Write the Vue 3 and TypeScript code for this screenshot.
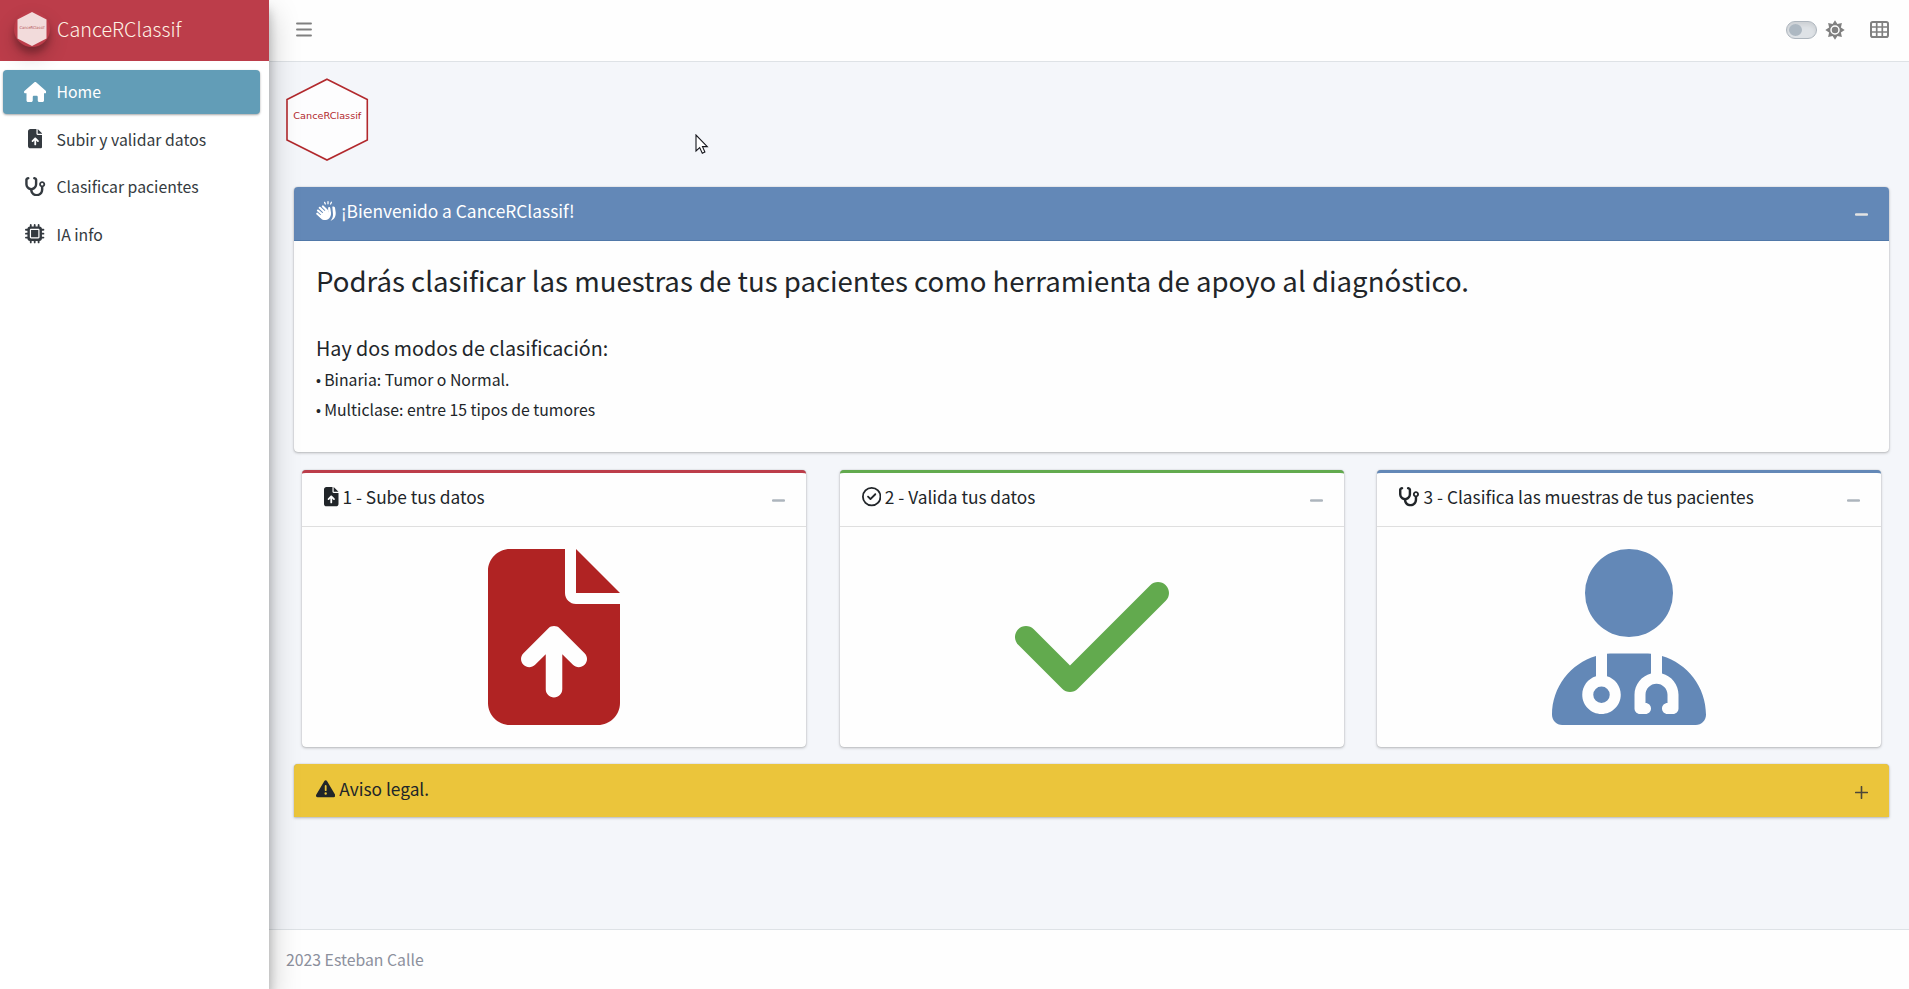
<script setup lang="ts">
import { ref } from 'vue'

interface Glyph { box: string; w: number; h: number; d: string }

const filePath = 'M64 0C28.7 0 0 28.7 0 64V448c0 35.3 28.7 64 64 64H320c35.3 0 64-28.7 64-64V160H256c-17.7 0-32-14.3-32-32V0H64zM256 0V128H384L256 0zM216 408c0 13.3-10.7 24-24 24s-24-10.7-24-24V305.9l-31 31c-9.4 9.4-24.6 9.4-33.9 0s-9.4-24.6 0-33.9l72-72c9.4-9.4 24.6-9.4 33.9 0l72 72c9.4 9.4 9.4 24.6 0 33.9s-24.6 9.4-33.9 0l-31-31V408z'
const stethoscopePath = 'M142.4 21.9c5.6 16.8-3.5 34.9-20.2 40.5L96 71.1V192c0 53 43 96 96 96s96-43 96-96V71.1l-26.1-8.7c-16.8-5.6-25.8-23.7-20.2-40.5s23.7-25.8 40.5-20.2l26.1 8.7C334.4 19.1 352 43.5 352 71.1V192c0 77.2-54.6 141.6-127.3 156.7C231 404.6 278.4 448 336 448c61.9 0 112-50.1 112-112V265.3c-28.3-12.3-48-40.5-48-73.3c0-44.2 35.8-80 80-80s80 35.8 80 80c0 32.8-19.7 61-48 73.3V336c0 97.2-78.8 176-176 176c-92.9 0-168.9-71.9-175.5-163.1C87.2 334.2 32 269.6 32 192V71.1c0-27.5 17.6-52 43.8-60.7l26.1-8.7c16.8-5.6 34.9 3.5 40.5 20.2zM480 224a32 32 0 1 0 0-64 32 32 0 1 0 0 64z'

const navItems: { label: string; glyph: Glyph }[] = [
  { label: 'Home', glyph: { box: '0 0 576 512', w: 22.5, h: 20, d: 'M575.8 255.5c0 18-15 32.1-32 32.1h-32l.7 160.2c0 2.7-.2 5.4-.5 8.1V472c0 22.1-17.9 40-40 40H456c-1.1 0-2.2 0-3.3-.1c-1.4 .1-2.8 .1-4.2 .1H416 392c-22.1 0-40-17.9-40-40V448 384c0-17.7-14.3-32-32-32H256c-17.7 0-32 14.3-32 32v64 24c0 22.1-17.9 40-40 40H160 128.1c-1.5 0-3-.1-4.5-.2c-1.2 .1-2.4 .2-3.6 .2H104c-22.1 0-40-17.9-40-40V360c0-.9 0-1.9 .1-2.8V287.6H32c-18 0-32-14-32-32.1c0-9 3-17 10-24L266.4 8c7-7 15-8 22-8s15 2 21 7L564.8 231.5c8 7 12 15 11 24z' } },
  { label: 'Subir y validar datos', glyph: { box: '0 0 384 512', w: 14.5, h: 19.36, d: filePath } },
  { label: 'Clasificar pacientes', glyph: { box: '0 0 576 512', w: 21.8, h: 19.36, d: stethoscopePath } },
  { label: 'IA info', glyph: { box: '0 0 512 512', w: 19.36, h: 19.36, d: 'M176 24c0-13.3-10.7-24-24-24s-24 10.7-24 24V64c-35.3 0-64 28.7-64 64H24c-13.3 0-24 10.7-24 24s10.7 24 24 24H64v56H24c-13.3 0-24 10.7-24 24s10.7 24 24 24H64v56H24c-13.3 0-24 10.7-24 24s10.7 24 24 24H64c0 35.3 28.7 64 64 64v40c0 13.3 10.7 24 24 24s24-10.7 24-24V448h56v40c0 13.3 10.7 24 24 24s24-10.7 24-24V448h56v40c0 13.3 10.7 24 24 24s24-10.7 24-24V448c35.3 0 64-28.7 64-64h40c13.3 0 24-10.7 24-24s-10.7-24-24-24H448V280h40c13.3 0 24-10.7 24-24s-10.7-24-24-24H448V176h40c13.3 0 24-10.7 24-24s-10.7-24-24-24H448c0-35.3-28.7-64-64-64V24c0-13.3-10.7-24-24-24s-24 10.7-24 24V64H280V24c0-13.3-10.7-24-24-24s-24 10.7-24 24V64H176V24zM160 128H352c17.7 0 32 14.3 32 32V352c0 17.7-14.3 32-32 32H160c-17.7 0-32-14.3-32-32V160c0-17.7 14.3-32 32-32zm192 32H160V352H352V160z' } },
]

const steps: { title: string; tone: string; small: Glyph; large: Glyph }[] = [
  {
    title: '1 - Sube tus datos',
    tone: 'red',
    small: { box: '0 0 384 512', w: 14.5, h: 19.36, d: filePath },
    large: { box: '0 0 384 512', w: 132, h: 176, d: filePath },
  },
  {
    title: '2 - Valida tus datos',
    tone: 'green',
    small: { box: '0 0 512 512', w: 19.36, h: 19.36, d: 'M256 0a256 256 0 1 1 0 512a256 256 0 1 1 0-512zM256 48a208 208 0 1 0 0 416a208 208 0 1 0 0-416zM369 209L241 337c-9.4 9.4-24.6 9.4-33.9 0l-64-64c-9.4-9.4-9.4-24.6 0-33.9s24.6-9.4 33.9 0l47 47L335 175c9.4-9.4 24.6-9.4 33.9 0s9.4 24.6 0 33.9z' },
    large: { box: '0 0 448 512', w: 154, h: 176, d: 'M438.6 105.4c12.5 12.5 12.5 32.8 0 45.3l-256 256c-12.5 12.5-32.8 12.5-45.3 0l-128-128c-12.5-12.5-12.5-32.8 0-45.3s32.8-12.5 45.3 0L160 338.7 393.4 105.4c12.5-12.5 32.8-12.5 45.3 0z' },
  },
  {
    title: '3 - Clasifica las muestras de tus pacientes',
    tone: 'blue',
    small: { box: '32 0 544 512', w: 20.6, h: 19.36, d: stethoscopePath },
    large: { box: '0 0 448 512', w: 154, h: 176, d: 'M224 256A128 128 0 1 0 224 0a128 128 0 1 0 0 256zm-96 55.2C54 332.9 0 401.3 0 482.3C0 498.7 13.3 512 29.7 512H418.3c16.4 0 29.7-13.3 29.7-29.7c0-81-54-149.4-128-171.1V362c27.6 7.1 48 32.2 48 62v40c0 8.8-7.2 16-16 16H336c-8.8 0-16-7.2-16-16s7.2-16 16-16V424c0-17.7-14.3-32-32-32s-32 14.3-32 32v24c8.8 0 16 7.2 16 16s-7.2 16-16 16H256c-8.8 0-16-7.2-16-16V424c0-29.8 20.4-54.9 48-62V304.9c-6-.6-12.1-.9-18.3-.9H178.3c-6.2 0-12.3 .3-18.3 .9v65.4c23.1 6.9 40 28.3 40 53.7c0 30.9-25.1 56-56 56s-56-25.1-56-56c0-25.4 16.9-46.8 40-53.7V311.2zM144 448a24 24 0 1 0 0-48 24 24 0 1 0 0 48z' },
  },
]

const active = ref('Home')
</script>

<template>
  <div class="app">
    <aside class="sidebar">
      <div class="brand">
        <svg class="brand-logo" width="36" height="36" viewBox="0 0 36 36">
          <path d="M18 1 32.5 8.5V27.5L18 35 3.500 27.500V8.500Z" fill="#f2dbdb" />
          <text x="5.500" y="17.500" textLength="25" lengthAdjust="spacingAndGlyphs">CanceRClassif</text>
        </svg>
        <span class="brand-name">CanceRClassif</span>
      </div>
      <nav class="nav">
        <a v-for="item in navItems" :key="item.label" class="nav-item" :class="{ active: active === item.label }" @click="active = item.label">
          <span class="nav-icon">
            <svg :width="item.glyph.w" :height="item.glyph.h" :viewBox="item.glyph.box"><path :d="item.glyph.d" /></svg>
          </span>
          <span class="nav-label">{{ item.label }}</span>
        </a>
      </nav>
    </aside>

    <div class="page">
      <header class="navbar">
        <svg class="burger" width="16" height="15" viewBox="0 0 16 15">
          <path d="M1 1.500H15M1 7.500H15M1 13.500H15" stroke="#808080" stroke-width="1.900" stroke-linecap="round" />
        </svg>
        <div class="tools">
          <span class="switch"><span class="knob"></span></span>
          <svg class="sun" width="20" height="20" viewBox="0 0 20 20">
            <path d="M10 .3 12.400 4.100 16.900 3.100 15.900 7.600 19.700 10 15.900 12.400 16.900 16.900 12.400 15.900 10 19.700 7.600 15.900 3.100 16.900 4.100 12.400 .3 10 4.100 7.600 3.100 3.100 7.600 4.100Z" fill="#808080" />
            <circle cx="10" cy="10" r="4" fill="#808080" stroke="#fff" stroke-width="1.500" />
          </svg>
          <svg class="table" width="19" height="17" viewBox="0 0 19 17">
            <rect x="1" y="1" width="17" height="15" rx="1.800" fill="none" stroke="#808080" stroke-width="2" />
            <path d="M1 6H18M1 11H18M6.700 1V16M12.300 1V16" stroke="#808080" stroke-width="1.700" />
          </svg>
        </div>
      </header>

      <main class="content">
        <svg class="hex" width="83" height="83" viewBox="0 0 83 83">
          <path d="M41 1.200 81.300 21.500V62L41 82 1 62V21.500Z" fill="#fdfdfe" stroke="#b2292d" stroke-width="1.600" />
          <text x="7.300" y="41" textLength="68" lengthAdjust="spacingAndGlyphs">CanceRClassif</text>
        </svg>

        <section class="card welcome">
          <div class="card-head">
            <h3 class="card-title">
              <svg class="title-icon" width="20" height="20" viewBox="0 0 20 20" fill="none" stroke="#fff" stroke-linecap="round">
                <path d="M8.600 1.300 9.300 3M12 .7V2.800M15.400 1.300 14.600 3" stroke-width="1.300" />
                <path d="M1.300 12.700 5 16M2 9.500 6.500 13.500M3.800 6.800 8.500 11.300M6.900 5.400 11.500 10" stroke-width="2.100" />
                <path d="M4 14.500 7 11.500 9.500 9 12.300 11.300 12.100 7.200C12.200 5.600 14.100 5.600 14.300 7.200L15 11.500C15.300 14 14.500 16 13 17.400C10.500 19.700 7 19.600 5 17.400L2.500 14.800Z" fill="#fff" stroke="none" />
                <path d="M16.300 5.800C18 5 19 6 19.100 7.300L19.700 11.500C20 15.300 18.200 18.700 14.500 19.800C16.800 17.300 17.300 14.800 16.900 11.700Z" fill="#fff" stroke="none" />
              </svg>
              <span>¡Bienvenido a CanceRClassif!</span>
            </h3>
            <svg class="toggle" width="13" height="13" viewBox="0 0 13 13"><path d="M1 6.500H12" stroke-width="2.400" stroke-linecap="round" /></svg>
          </div>
          <div class="welcome-body">
            <h2>Podrás clasificar las muestras de tus pacientes como herramienta de apoyo al diagnóstico.</h2>
            <h4>Hay dos modos de clasificación:</h4>
            <p><span class="bullet">•</span>Binaria: Tumor o Normal.</p>
            <p><span class="bullet">•</span>Multiclase: entre 15 tipos de tumores</p>
          </div>
        </section>

        <div class="steps">
          <section v-for="step in steps" :key="step.title" class="card step" :class="step.tone">
            <div class="card-head">
              <h3 class="card-title">
                <svg class="title-icon" :width="step.small.w" :height="step.small.h" :viewBox="step.small.box"><path :d="step.small.d" fill-rule="evenodd" /></svg>
                <span>{{ step.title }}</span>
              </h3>
              <svg class="toggle" width="13" height="13" viewBox="0 0 13 13"><path d="M1 6.500H12" stroke-width="2.400" stroke-linecap="round" /></svg>
            </div>
            <div class="step-body">
              <svg :width="step.large.w" :height="step.large.h" :viewBox="step.large.box"><path :d="step.large.d" /></svg>
            </div>
          </section>
        </div>

        <section class="card legal">
          <div class="card-head">
            <h3 class="card-title">
              <svg class="title-icon" width="19.360" height="19.360" viewBox="0 0 512 512"><path d="M256 32c14.2 0 27.3 7.5 34.5 19.8l216 368c7.3 12.4 7.3 27.7 .2 40.1S486.3 480 472 480H40c-14.3 0-27.6-7.7-34.7-20.1s-7-27.8 .2-40.1l216-368C228.7 39.5 241.8 32 256 32zm0 128c-13.3 0-24 10.7-24 24V296c0 13.3 10.7 24 24 24s24-10.7 24-24V184c0-13.3-10.7-24-24-24zm32 224a32 32 0 1 0 -64 0 32 32 0 1 0 64 0z" /></svg>
              <span>Aviso legal.</span>
            </h3>
            <svg class="toggle" width="13" height="13" viewBox="0 0 13 13"><path d="M.7 6.500H12.300M6.500 .7V12.300" stroke-width="1.600" stroke-linecap="round" /></svg>
          </div>
        </section>
      </main>

      <footer class="footer">2023 Esteban Calle</footer>
    </div>

    <svg class="cursor" width="14" height="21" viewBox="0 0 14 21">
      <path d="M1 1V17L4.700 13.600 7.300 19.200 9.900 18 7.500 12.600H12.300Z" fill="#fff" stroke="#15161c" stroke-width="1.100" />
    </svg>
  </div>
</template>

<style>
body {
  margin: 0;
  overflow: hidden;
}
</style>

<style scoped>
.app {
  position: relative;
  display: flex;
  width: 100vw;
  height: 100vh;
  overflow: hidden;
  background: #f4f6fa;
  color: #212529;
  font-family: "Noto Sans CJK SC", "Open Sans", sans-serif;
  font-size: 15.8px;
}
h2, h3, h4, p {
  margin: 0;
  font-weight: 400;
}
svg {
  display: block;
  flex: none;
}
.sidebar {
  position: relative;
  z-index: 2;
  flex: none;
  width: 269px;
  background: #fff;
  box-shadow: 0 14px 28px rgba(0, 0, 0, 0.25), 0 10px 10px rgba(0, 0, 0, 0.22);
}
.brand {
  display: flex;
  align-items: center;
  box-sizing: border-box;
  height: 61px;
  padding: 0 0 4px 14px;
  background: #bc3d4a;
  color: #fff4e6;
}
.brand-logo {
  border-radius: 50%;
  box-shadow: 0 10px 20px rgba(0, 0, 0, 0.19), 0 6px 6px rgba(0, 0, 0, 0.23);
}
.brand-logo text {
  fill: #b5555a;
  font: 4px "DejaVu Sans", sans-serif;
}
.brand-name {
  margin-left: 7px;
  font-size: 19.8px;
  font-weight: 300;
  line-height: 30px;
}
.nav {
  display: flex;
  flex-direction: column;
  gap: 3.5px;
  padding: 9px 9px 0 3px;
}
.nav-item {
  display: flex;
  align-items: center;
  box-sizing: border-box;
  height: 44px;
  padding: 0 0 1px 17px;
  border-radius: 4px;
  color: #343a40;
  line-height: 26px;
  cursor: default;
}
.nav-item.active {
  background: #629db7;
  color: #fff;
  box-shadow: 0 1px 3px rgba(0, 0, 0, 0.12), 0 1px 2px rgba(0, 0, 0, 0.24);
}
.nav-icon {
  display: flex;
  justify-content: center;
  width: 30px;
  margin-right: 6.500px;
}
.nav-icon svg {
  fill: currentColor;
}
.nav-label {
  padding-top: 1px;
}
.page {
  display: flex;
  flex: 1;
  flex-direction: column;
  min-width: 0;
}
.navbar {
  display: flex;
  align-items: center;
  justify-content: space-between;
  box-sizing: border-box;
  height: 62px;
  padding: 0 20px 2px 27px;
  border-bottom: 1px solid #dee2e6;
  background: #fefefe;
}
.tools {
  display: flex;
  align-items: center;
}
.switch {
  box-sizing: border-box;
  width: 31px;
  height: 18px;
  padding: 2px;
  border: 1px solid #adb5bd;
  border-radius: 9px;
  background: #dee2e6;
  box-shadow: inset 0 3px 4px rgba(0, 0, 0, 0.08);
}
.knob {
  display: block;
  width: 13px;
  height: 12px;
  border-radius: 50%;
  background: #adb8c2;
}
.sun {
  margin-left: 8px;
}
.table {
  margin-left: 25px;
}
.content {
  flex: 1;
  padding: 16px 20px 0 25px;
}
.hex {
  margin: 0 0 26px -8px;
}
.hex text {
  fill: #b2292d;
  font: 9.200px "DejaVu Sans", sans-serif;
}
.card {
  border-radius: 4px;
  background: #fefefe;
  box-shadow: 0 0 1px rgba(0, 0, 0, 0.3), 0 1px 3px rgba(0, 0, 0, 0.25);
}
.card-head {
  display: flex;
  justify-content: space-between;
  box-sizing: border-box;
  height: 54px;
  padding: 8.5px 21px 0 22px;
  border-bottom: 1px solid #dfdfdf;
}
.card-title {
  display: flex;
  align-items: center;
  gap: 4px;
  height: 29px;
  font-size: 17.300px;
  line-height: 29px;
}
.title-icon {
  margin-top: 2px;
  fill: currentColor;
}
.toggle {
  margin-top: 12px;
  fill: none;
  stroke: #adb5bd;
}
.welcome .card-head {
  border-color: #5078a8;
  border-radius: 4px 4px 0 0;
  background: #6388b7;
  color: #fff;
}
.welcome .card-title {
  gap: 5px;
  font-size: 17.360px;
}
.welcome .toggle {
  stroke: #e3e3e3;
}
.welcome-body {
  height: 211px;
  box-sizing: border-box;
  padding: 23px 22px 0;
}
.welcome-body h2 {
  font-size: 27.580px;
  line-height: 33px;
}
.welcome-body h4 {
  margin: 38px 0 3.5px;
  font-size: 19.700px;
  line-height: 26.400px;
}
.welcome-body p {
  line-height: 30px;
}
.bullet {
  display: inline-block;
  width: 8.200px;
  font-family: "Liberation Sans", sans-serif;
  font-size: 14px;
  line-height: 20px;
}
.steps {
  display: grid;
  grid-template-columns: repeat(3, 504px);
  justify-content: space-between;
  margin: 18px 8px 17px;
}
.step {
  border-top: 3px solid;
}
.step .card-head {
  color: #212529;
}
.step-body {
  display: flex;
  justify-content: center;
  padding: 22px 0;
}
.red {
  border-color: #bc3d4a;
}
.green {
  border-color: #62aa4e;
}
.blue {
  border-color: #6388b7;
}
.red .step-body {
  fill: #b02323;
}
.green .step-body {
  fill: #62aa4e;
}
.blue .step-body {
  fill: #6388b7;
}
.legal {
  border-radius: 4px 4px 0 0;
  background: #ebc53b;
}
.legal .card-head {
  height: 53px;
  padding-top: 9.500px;
  border: 0;
}
.legal .toggle {
  stroke: #4d4738;
}
.footer {
  box-sizing: border-box;
  height: 60px;
  padding-left: 17px;
  border-top: 1px solid #dee2e6;
  background: #fefefe;
  color: #8c909d;
  line-height: 59px;
}
.cursor {
  position: absolute;
  top: 134px;
  left: 695px;
  z-index: 3;
}
</style>
